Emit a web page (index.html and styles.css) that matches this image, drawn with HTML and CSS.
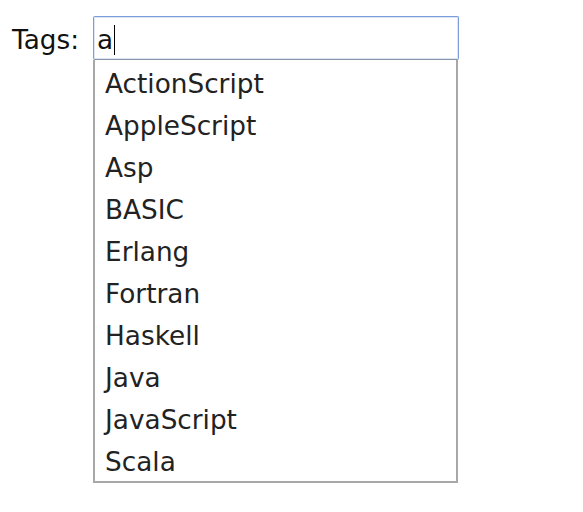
FILE: index.html
```html
<!DOCTYPE html>
<html>
<head>
<meta charset="utf-8">
<link rel="stylesheet" href="styles.css">
</head>
<body>
<div class="widget">
  <label class="label" for="tags">Tags:</label>
  <div class="field">
    <div class="input"><span class="value">a</span><span class="caret"></span></div>
    <ul class="menu">
      <li>ActionScript</li>
      <li>AppleScript</li>
      <li>Asp</li>
      <li>BASIC</li>
      <li>Erlang</li>
      <li>Fortran</li>
      <li>Haskell</li>
      <li>Java</li>
      <li>JavaScript</li>
      <li>Scala</li>
    </ul>
  </div>
</div>
</body>
</html>
```
FILE: styles.css
```css
html, body {
  margin: 0;
  padding: 0;
  background: #fff;
}
body {
  font-family: "DejaVu Sans", Verdana, sans-serif;
  font-size: 26.3px;
  color: #222;
}
.widget {
  display: flex;
  align-items: flex-start;
  padding: 16px 0 0 12px;
}
.label {
  color: #111;
  line-height: 43px;
  padding-top: 3px;
  margin-right: 14px;
}
.field {
  display: flex;
  flex-direction: column;
}
.input {
  box-sizing: border-box;
  width: 366px;
  height: 44px;
  border: 1px solid #7c9ddb;
  border-bottom-color: #8a93a8;
  box-shadow: inset 0 0 0 1px rgba(124,157,219,0.25);
  border-radius: 2px;
  display: flex;
  align-items: center;
  padding: 4px 0 0 3px;
  color: #111;
}
.caret {
  display: inline-block;
  width: 1px;
  height: 30px;
  background: #000;
  margin-left: 1px;
}
.menu {
  list-style: none;
  margin: 0 1px 0 0;
  padding: 1px 0 0 0;
  box-sizing: border-box;
  width: 365px;
  border: 2px solid #a8a8a8;
  border-top: none;
}
.menu li {
  height: 42px;
  line-height: 46px;
  overflow: visible;
  padding-left: 10px;
  color: #222;
}
```
